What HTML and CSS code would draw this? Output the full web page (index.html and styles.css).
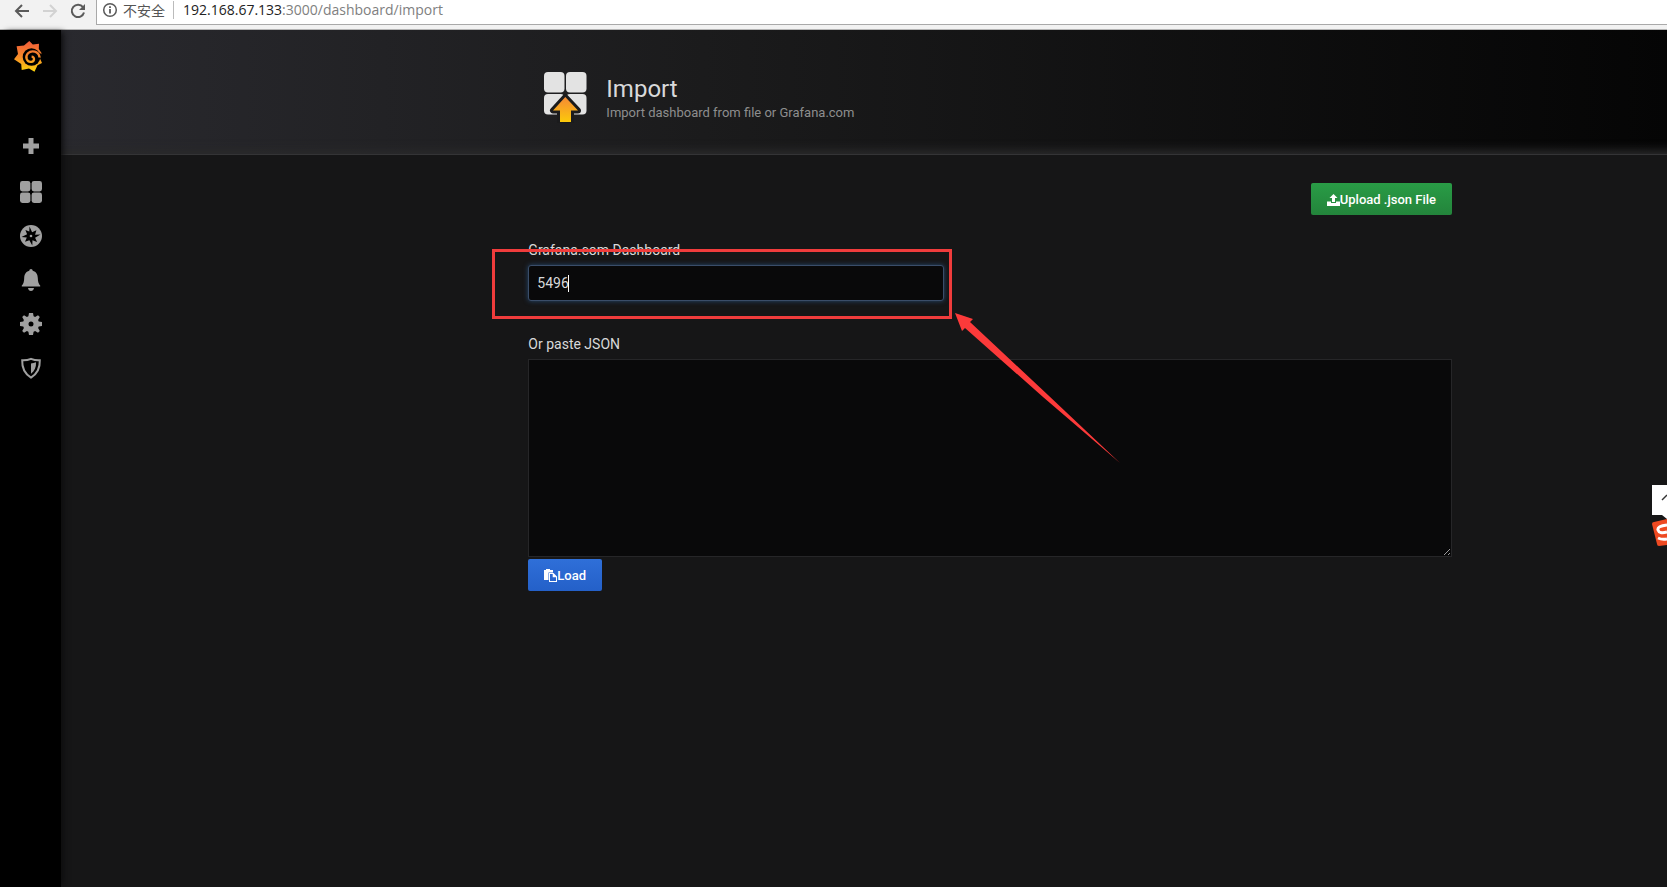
FILE: index.html
```html
<!DOCTYPE html>
<html lang="en">
<head>
<meta charset="utf-8">
<title>Grafana - Import</title>
<link rel="stylesheet" href="styles.css">
</head>
<body>
<div class="chrome">
  <button class="chrome-btn" aria-label="Back"><svg width="16" height="16" viewBox="0 0 16 16" fill="none" stroke="#5a5a5a" stroke-width="2"><path d="M15 8H2M8 2L2 8l6 6"/></svg></button>
  <button class="chrome-btn" aria-label="Forward"><svg width="16" height="16" viewBox="0 0 16 16" fill="none" stroke="#d2d2d2" stroke-width="2"><path d="M1 8h13M8 2l6 6-6 6"/></svg></button>
  <button class="chrome-btn" aria-label="Reload"><svg width="16" height="16" viewBox="0 0 16 16"><path d="M13 4.2A6.2 6.2 0 1 0 14 9.500" fill="none" stroke="#5a5a5a" stroke-width="2"/><path d="M15 1v6H9z" fill="#5a5a5a"/></svg></button>
  <div class="omnibox">
    <svg width="16" height="16" viewBox="0 0 16 16" fill="none" stroke="#5a5a5a"><circle cx="8" cy="8" r="6.300" stroke-width="1.500"/><path d="M8 7v4.500M8 4.200v1.800" stroke-width="1.800"/></svg>
    <span class="insecure">不安全</span>
    <span class="url"><b>192.168.67.133</b>:3000/dashboard/import</span>
  </div>
</div>
<div class="app">
  <nav class="sidemenu">
    <a class="logo" href="#" aria-label="Home"><svg width="29" height="31" viewBox="0 0 29 31">
      <defs><linearGradient id="flame" gradientUnits="userSpaceOnUse" x1="0" y1="0" x2="0" y2="31"><stop offset="0" stop-color="#ee5a3a"/><stop offset=".5" stop-color="#f78a2a"/><stop offset="1" stop-color="#fcd60a"/></linearGradient></defs>
      <path fill="url(#flame)" d="M15.300 0L18.800 3.600 25 2.800 24.800 8 27.500 12 26 17.500 28 22 23.500 24.200 20.500 30.700 15 27.400 7.700 29 7.200 23 0 18.300 4 13 2.600 5.200 10 4.400z"/>
      <circle cx="17.500" cy="16" r="8.800" fill="#000"/>
      <path fill="none" stroke="#000" stroke-width="2" d="M25 12l3 4"/>
      <path fill="none" stroke="url(#flame)" stroke-width="2.300" d="M25.500 16.500C25 10 17.500 8.800 14 12.300c-3.500 3.700-1 9 3.200 8.600 3.600-.4 3.800-5.100.4-5.300"/>
    </svg></a>
    <a class="item first" href="#" aria-label="Create"><svg width="22" height="22" viewBox="0 0 22 22"><path d="M8.500 3h5v5.500H19v5h-5.500V19h-5v-5.500H3v-5h5.500z"/></svg></a>
    <a class="item" href="#" aria-label="Dashboards"><svg width="22" height="22" viewBox="0 0 22 22"><rect width="10.400" height="10.400" rx="2.400"/><rect x="11.600" width="10.400" height="10.400" rx="2.400"/><rect y="11.600" width="10.400" height="10.400" rx="2.400"/><rect x="11.600" y="11.600" width="10.400" height="10.400" rx="2.400"/></svg></a>
    <a class="item" href="#" aria-label="Explore"><svg width="22" height="22" viewBox="0 0 22 22"><circle cx="11" cy="11" r="11"/><path fill="#000" d="M9.500 1.500l2.600 5.800 4.300-2-1.300 4.500 5.400-.3-5.400 3.200 2 4.300-4.600-1.700-.2 5.200-2.900-5.300-4.400 1.600 1.800-4.300-5.300-.5 5.600-2.800-1.700-4.300 3.900 1.700z"/><circle cx="11" cy="11" r="1.300"/></svg></a>
    <a class="item" href="#" aria-label="Alerting"><svg width="22" height="22" viewBox="0 0 22 22"><path d="M11 0c1 0 1.600.8 1.700 1.700 3.600.8 5 3.800 5.100 7.300.1 4 .7 5.700 2.400 7.600v.9H1.800v-.9C3.500 14.700 4.100 13 4.200 9c.1-3.500 1.500-6.500 5.100-7.300C9.400.8 10 0 11 0zM8 19h6c-.3 1.700-1.400 3-3 3s-2.700-1.300-3-3z"/></svg></a>
    <a class="item" href="#" aria-label="Configuration"><svg width="22" height="22" viewBox="0 0 22 22"><path fill-rule="evenodd" d="M9 0h4l.6 3.300 1.500.6L18 2.200 19.800 4l-1.700 2.900.6 1.500L22 9v4l-3.300.6-.6 1.500 1.700 2.900-1.800 1.800-2.900-1.700-1.500.6L13 22H9l-.6-3.300-1.500-.6L4 19.800 2.200 18l1.700-2.900-.6-1.500L0 13V9l3.300-.6.6-1.500L2.200 4 4 2.200l2.900 1.700 1.500-.6zM11 8.500a2.500 2.500 0 1 0 0 5 2.500 2.500 0 0 0 0-5z"/></svg></a>
    <a class="item" href="#" aria-label="Server Admin"><svg width="22" height="22" viewBox="0 0 22 22"><path fill="none" stroke="#a0a0a0" stroke-width="2" d="M11 1.800c2.800 1.200 5.600 1.700 8.800 1.500.3 7.500-2.300 13.400-8.800 17.300C4.500 16.700 1.900 10.800 2.200 3.300c3.200.2 6-.3 8.800-1.500z"/><path d="M11 6.500c1.700-.1 3.300-.5 5-1.200.3 4.900-1.400 8.600-5 11.500z"/></svg></a>
  </nav>
  <main class="main">
    <header class="page-header">
      <div class="heading">
        <svg class="heading-icon" width="44" height="51" viewBox="0 0 44 51">
          <defs><linearGradient id="arrow" x1="0" y1="0" x2="0" y2="1"><stop offset="0" stop-color="#f58a35"/><stop offset="1" stop-color="#fcc90a"/></linearGradient></defs>
          <g fill="#e3e3e3"><rect width="20.500" height="20.500" rx="4"/><rect x="22" width="20.500" height="20.500" rx="4"/><rect y="22" width="20.500" height="20.500" rx="4"/><rect x="22" y="22" width="20.500" height="20.500" rx="4"/></g>
          <path d="M21.300 25L9 38.500h7V50h11V38.500h7z" fill="#1b1b1c" stroke="#1b1b1c" stroke-width="6" stroke-linejoin="round"/>
          <path d="M21.300 25L9 38.500H16V50h11V38.500h7z" fill="url(#arrow)"/>
        </svg>
        <div>
          <h1>Import</h1>
          <p class="subtitle">Import dashboard from file or Grafana.com</p>
        </div>
      </div>
    </header>
    <form class="import">
      <div class="toolbar">
        <button type="button" class="btn btn-green"><svg width="13" height="12" viewBox="0 0 13 12" fill="#fff"><path d="M6.500 0L10.500 4H8v4H5V4H2.500zM0 7.500h4V9h5V7.500h4V12H0z"/></svg>Upload .json File</button>
      </div>
      <label for="gcom">Grafana.com Dashboard</label>
      <div class="field">
        <input id="gcom" type="text" value="5496">
        <span class="caret"></span>
      </div>
      <label for="json">Or paste JSON</label>
      <textarea id="json"></textarea>
      <button type="button" class="btn btn-blue"><svg width="13" height="13" viewBox="0 0 13 13" fill="#fff"><path d="M0 1h2V0h4v1h3v2.500H4.500V11H0z"/><path fill-rule="evenodd" d="M5 4h4.500L13 7.500V13H5zM6 5v7h6V8.300H8.700V5z"/></svg>Load</button>
      <div class="mark"></div>
      <svg class="mark-arrow" width="166" height="151" viewBox="0 0 166 151"><path fill="#fc3a3a" d="M0 0l18 6-3 3 78 73 72 68-77-66L10 15l-3 3z"/></svg>
    </form>
    <div class="ime">
      <svg width="15" height="34" viewBox="0 0 15 34"><path fill="#fff" d="M0 0h15v34l-5-4H0z"/><path d="M10 15l5-5" stroke="#333" stroke-width="1.500"/></svg>
      <svg width="15" height="27" viewBox="0 0 15 27"><path fill="#ee4a22" d="M0 5q0-2 2-2L15 0v26l-8 1q-2 0-2-2z"/><path fill="none" stroke="#fff" stroke-width="3" d="M15 6Q5 7 6 11t9 2M6 19q4 2 9 1"/></svg>
    </div>
  </main>
</div>
</body>
</html>
```
FILE: styles.css
```css
* { box-sizing: border-box; }
body {
  margin: 0;
  min-height: 100vh;
  display: flex;
  flex-direction: column;
  background: #161617;
  color: #d8d9da;
  font: 14px/20px Roboto, sans-serif;
}
.chrome {
  display: flex;
  align-items: flex-start;
  height: 30px;
  padding-left: 14px;
  gap: 12px;
  background: #f2f2f2;
  border-bottom: 1px solid #b5b5b5;
}
.chrome-btn {
  display: flex;
  width: 16px;
  padding: 3px 0;
  border: 0;
  background: none;
}
.omnibox {
  flex: 1;
  display: flex;
  align-items: center;
  height: 25px;
  margin-left: -2px;
  padding: 0 0 4px 5px;
  gap: 5px;
  background: #fff;
  border: solid #a9a9a9;
  border-width: 0 0 1px 1px;
}
.insecure {
  padding-right: 8px;
  border-right: 1px solid #bbb;
  color: #555;
  font: 14px/18px "Noto Sans CJK SC", sans-serif;
}
.url {
  padding-left: 4px;
  color: #808080;
  font: 14px/20px "Open Sans", sans-serif;
}
.url b { color: #222; font-weight: 400; }
.app { flex: 1; display: flex; }
.sidemenu {
  flex: none;
  display: flex;
  flex-direction: column;
  width: 61px;
  background: #000;
  box-shadow: 4px 0 6px -2px #0c0c0d;
  z-index: 1;
}
.logo { display: flex; padding: 11px 0 52px 14px; }
.item {
  display: flex;
  justify-content: center;
  height: 44px;
  align-items: center;
}
.first { margin-bottom: 2px; }
.item svg { fill: #a0a0a0; }
.main { flex: 1; position: relative; }
.page-header, .import {
  padding-left: 29.1%;
  padding-right: 215px;
}
.page-header {
  height: 125px;
  background: linear-gradient(90deg, #29292e, #1b1b1c 40%, #050505);
  border-bottom: 1px solid #343436;
  box-shadow: inset 0 -14px 10px -10px #2a2a2b;
}
.heading { display: flex; gap: 18px; padding: 42px 0 0 16px; }
h1 { margin: 3px 0 0; font-size: 24px; line-height: 29px; font-weight: 400; }
.subtitle { margin: 0; font-size: 13px; line-height: 18px; color: #8e8e8e; }
.import {
  display: flex;
  flex-direction: column;
  align-items: flex-start;
  position: relative;
}
.toolbar { align-self: flex-end; margin: 28px 0 25px; }
.btn {
  display: flex;
  align-items: center;
  justify-content: center;
  height: 32px;
  padding: 1px 16px 0;
  border: 0;
  border-radius: 2px;
  color: #fff;
  font: 500 13px/20px Roboto, sans-serif;
}
.btn-green { background: linear-gradient(#299c46, #23843b); }
.btn-blue { background: linear-gradient(#2f6fd8, #2460c8); margin-top: 2px; }
label { line-height: 20px; margin-bottom: 5px; }
.field { position: relative; width: 45%; margin-bottom: 33px; }
input, textarea {
  display: block;
  width: 100%;
  background: #09090a;
  border: 1px solid #262628;
  color: #d8d9da;
  font: 14px/20px Roboto, sans-serif;
  color-scheme: dark;
}
input {
  height: 36px;
  padding: 0 8px;
  border-color: #3a4d69;
  border-radius: 3px;
  box-shadow: 0 0 5px #27496f;
}
.caret {
  position: absolute;
  left: 40px;
  top: 10px;
  width: 1px;
  height: 17px;
  background: #fff;
}
textarea { height: 198px; resize: vertical; }
.mark {
  position: absolute;
  top: 94px;
  left: calc(29.1% - 36px);
  width: 460px;
  height: 70px;
  border: 3px solid #f03c3c;
}
.mark-arrow { position: absolute; top: 158px; left: calc(29.1% + 427px); }
.ime {
  position: absolute;
  right: 0;
  top: 455px;
  display: flex;
  flex-direction: column;
  align-items: flex-end;
}
```
